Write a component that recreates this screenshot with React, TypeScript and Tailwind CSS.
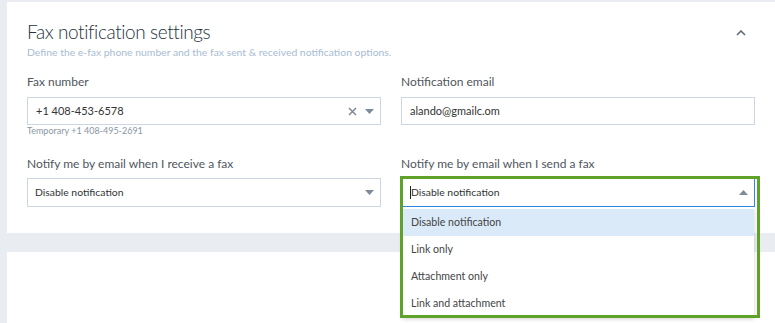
const font = { fontFamily: "Lato, 'Noto Sans', sans-serif" };

function Caret({ up = false }: { up?: boolean }) {
  return (
    <svg width="9" height="5" viewBox="0 0 9 5" className="shrink-0">
      {up ? <path d="M0 5 L4.5 0 L9 5 Z" fill="#7d8a98" /> : <path d="M0 0 L4.5 5 L9 0 Z" fill="#7d8a98" />}
    </svg>
  );
}

const options = ["Disable notification", "Link only", "Attachment only", "Link and attachment"];

export default function App() {
  return (
    <div className="w-[775px] h-[323px] overflow-hidden bg-[#e9edf1] pl-[7px] pt-[2px]" style={font}>
      <div className="bg-white px-[20px] pt-[18px] pb-[26px]">
        <div className="flex items-start justify-between">
          <div>
            <h1 className="text-[19px] leading-[24px] font-light tracking-[-0.4px] text-[#27313b]">Fax notification settings</h1>
            <p className="text-[10.4px] leading-[13px] text-[#a9bcd0] mt-[2px]">
              Define the e-fax phone number and the fax sent &amp; received notification options.
            </p>
          </div>
          <svg width="10" height="6" viewBox="0 0 10 6" className="mt-[10px] mr-[9px]">
            <path d="M1 5 L5 1 L9 5" fill="none" stroke="#5f6b78" strokeWidth="1.6" />
          </svg>
        </div>

        <div className="grid grid-cols-2 gap-x-[20px] mt-[15px]">
          <div>
            <div className="text-[12px] leading-[15px] text-[#50565d] mb-[8px]">Fax number</div>
            <div className="h-[28px] border border-[#cdd7e3] flex items-center pl-[8px] pr-[6px]">
              <span className="flex-1 text-[11px] text-[#333]">+1 408-453-6578</span>
              <svg width="9" height="9" viewBox="0 0 9 9" className="mr-[8px]">
                <path d="M1 1 L8 8 M8 1 L1 8" stroke="#7d8a98" strokeWidth="1.5" />
              </svg>
              <Caret />
            </div>
            <div className="text-[9px] leading-[11px] text-[#8a96a3]">Temporary +1 408-495-2691</div>
          </div>
          <div>
            <div className="text-[12px] leading-[15px] text-[#50565d] mb-[8px]">Notification email</div>
            <div className="h-[28px] border border-[#cdd7e3] flex items-center pl-[8px]">
              <span className="text-[11px] text-[#333]">alando@gmailc.om</span>
            </div>
          </div>
        </div>

        <div className="grid grid-cols-2 gap-x-[20px] mt-[20px]">
          <div>
            <div className="text-[12px] leading-[15px] text-[#50565d] mb-[7px]">Notify me by email when I receive a fax</div>
            <div className="h-[29px] border border-[#cdd7e3] flex items-center pl-[7px] pr-[6px]">
              <span className="flex-1 text-[10.4px] text-[#333]">Disable notification</span>
              <Caret />
            </div>
          </div>
          <div>
            <div className="text-[12px] leading-[15px] text-[#50565d] mb-[7px]">Notify me by email when I send a fax</div>
            <div className="relative">
              <div className="h-[29px] border border-[#2b8ae6] flex items-center pl-[8px] pr-[6px]">
                <span className="w-px h-[13px] bg-[#222]" />
                <span className="flex-1 text-[10.4px] text-[#333]">Disable notification</span>
                <Caret up />
              </div>
              <div className="absolute left-[1px] right-[1px] top-[29px] pt-[2px] bg-white shadow-[0_2px_4px_rgba(0,0,0,0.18)] z-10">
                {options.map((o, i) => (
                  <div
                    key={o}
                    className={`h-[27px] flex items-center pl-[9px] text-[10.6px] text-[#444] ${i === 0 ? "bg-[#daeaf8]" : ""}`}
                  >
                    {o}
                  </div>
                ))}
              </div>
              <div className="absolute -left-[1px] -right-[5px] -top-[2px] h-[142px] border-[3px] border-[#5fa22a] z-20 pointer-events-none" />
            </div>
          </div>
        </div>
      </div>
      <div className="h-[19px]" />
      <div className="bg-white h-[80px]" />
    </div>
  );
}
